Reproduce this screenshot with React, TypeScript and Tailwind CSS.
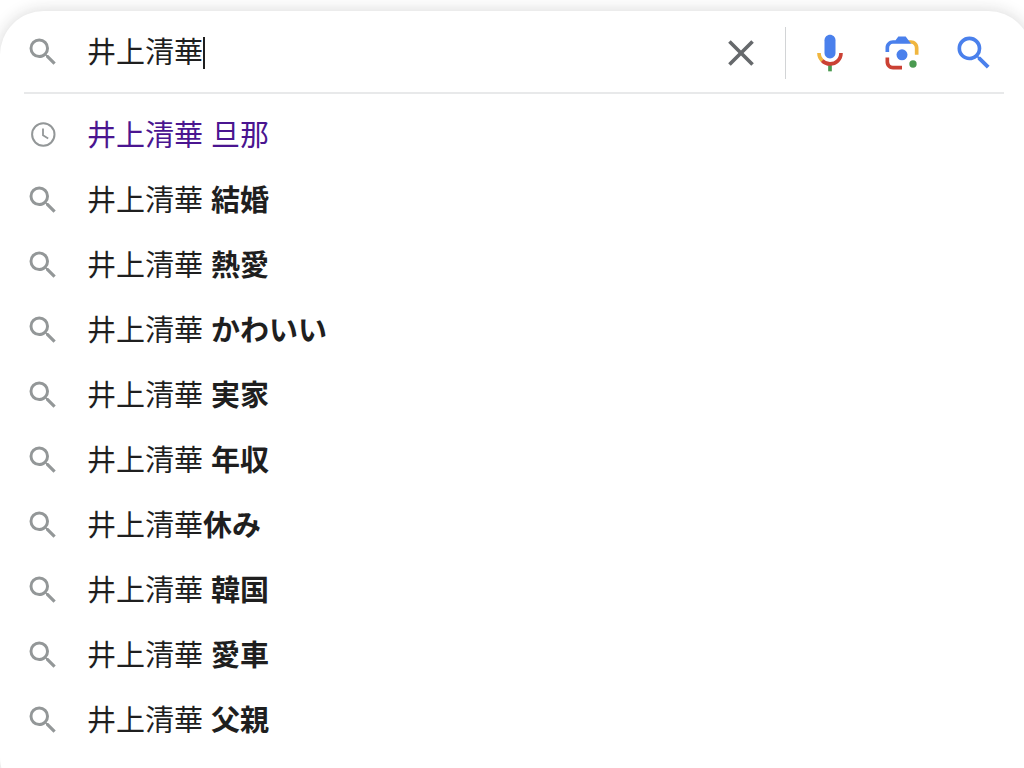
import { useState } from 'react';

type Suggestion = {
  query: string;
  completion: string;
  spaced?: boolean;
  visited?: boolean;
};

const suggestions: Suggestion[] = [
  { query: '井上清華', completion: '旦那', spaced: true, visited: true },
  { query: '井上清華', completion: '結婚', spaced: true },
  { query: '井上清華', completion: '熱愛', spaced: true },
  { query: '井上清華', completion: 'かわいい', spaced: true },
  { query: '井上清華', completion: '実家', spaced: true },
  { query: '井上清華', completion: '年収', spaced: true },
  { query: '井上清華', completion: '休み' },
  { query: '井上清華', completion: '韓国', spaced: true },
  { query: '井上清華', completion: '愛車', spaced: true },
  { query: '井上清華', completion: '父親', spaced: true },
];

function SearchIcon({ className }: { className: string }) {
  return (
    <svg viewBox="0 0 24 24" fill="currentColor" aria-hidden="true" className={className}>
      <path d="M15.5 14h-.79l-.28-.27A6.471 6.471 0 0 0 16 9.5 6.5 6.5 0 1 0 9.5 16c1.61 0 3.09-.59 4.23-1.57l.27.28v.79l5 4.99L20.49 19l-4.99-5zm-6 0C7.01 14 5 11.99 5 9.5S7.01 5 9.5 5 14 7.01 14 9.5 11.99 14 9.5 14z" />
    </svg>
  );
}

function ClockIcon({ className }: { className: string }) {
  return (
    <svg viewBox="0 0 36 36" fill="none" stroke="currentColor" aria-hidden="true" className={className}>
      <circle cx="18.3" cy="17.5" r="11.2" strokeWidth="2" />
      <path d="M18 11.5v6.8l5.2 3.2" strokeWidth="1.8" />
    </svg>
  );
}

function ClearIcon() {
  return (
    <svg viewBox="0 0 24 24" fill="currentColor" aria-hidden="true" className="size-11">
      <path d="M19 6.41L17.59 5 12 10.59 6.41 5 5 6.41 10.59 12 5 17.59 6.41 19 12 13.41 17.59 19 19 17.59 13.41 12z" />
    </svg>
  );
}

function MicIcon() {
  return (
    <svg viewBox="0 0 24 24" aria-hidden="true" className="size-11">
      <path fill="#4a80ec" d="m12 15c1.66 0 3-1.31 3-2.97v-7.02c0-1.66-1.34-3.01-3-3.01s-3 1.34-3 3.01v7.02c0 1.66 1.34 2.97 3 2.97z" />
      <path fill="#4a9a50" d="m11 18.08h2v3.92h-2z" />
      <path fill="#f0b63f" d="m7.05 16.87c-1.27-1.33-2.05-2.83-2.05-4.87h2c0 1.45 0.56 2.42 1.47 3.38v0.32l-1.15 1.18z" />
      <path fill="#cb4134" d="m12 16.93a4.97 5.25 0 0 1 -3.54 -1.55l-1.41 1.49c1.26 1.34 3.02 2.13 4.95 2.13 3.87 0 6.99-2.92 6.99-7h-1.99c0 2.92-2.24 4.93-5 4.93z" />
    </svg>
  );
}

function LensIcon() {
  return (
    <svg viewBox="0 0 192 192" aria-hidden="true" className="size-11">
      <circle fill="#4a9a50" cx="144" cy="144" r="16" />
      <circle fill="#4a80ec" cx="96" cy="104" r="24" />
      <path fill="#cb4134" d="M24,135.2c0,18.11,14.69,32.8,32.8,32.8H96v-16l-40.1-0.1c-8.8,0-15.9-8.19-15.9-17.9v-18H24V135.2z" />
      <path fill="#f0b63f" d="M168,72.8c0-18.11-14.69-32.8-32.8-32.8H116l20,16c8.8,0,16,8.29,16,18v30h16V72.8z" />
      <path fill="#4a80ec" d="M112,24l-32,0L68,40H56.8C38.69,40,24,54.69,24,72.8V92h16V74c0-9.71,7.2-18,16-18h80L112,24z" />
    </svg>
  );
}

export default function App() {
  const [value, setValue] = useState('井上清華');

  return (
    <main className="h-screen overflow-hidden bg-white pt-[11px] font-['Liberation_Sans','Noto_Sans_CJK_JP',sans-serif] text-[29px] leading-10 text-[#1f1f1f]">
      <div className="-mr-2 rounded-[44px] bg-white pr-2 pb-12 shadow-[0_0_16px_rgba(32,33,36,0.18)]">
        <form role="search" onSubmit={(e) => e.preventDefault()} className="flex h-[81px] items-center pt-0.5 pr-7 pl-[25px]">
          <SearchIcon className="mb-0.5 size-9 shrink-0 text-[#939798]" />
          <div className="ml-[26px] flex min-w-0 flex-1 items-center">
            <input
              type="text"
              aria-label="検索"
              autoComplete="off"
              value={value}
              onChange={(e) => setValue(e.target.value)}
              className="field-sizing-content max-w-full bg-transparent caret-transparent outline-none"
            />
            <span className="h-8 w-0.5 shrink-0 bg-[#1f1f1f]" />
          </div>
          <button type="button" aria-label="クリア" onClick={() => setValue('')} className="text-[#66696c]">
            <ClearIcon />
          </button>
          <span className="mx-[22px] h-[52px] w-px bg-[#d2d4d6]" />
          <div className="flex items-center gap-7">
            <button type="button" aria-label="音声で検索">
              <MicIcon />
            </button>
            <button type="button" aria-label="画像で検索">
              <LensIcon />
            </button>
            <button type="submit" aria-label="検索する" className="text-[#4a80ec]">
              <SearchIcon className="size-11" />
            </button>
          </div>
        </form>
        <hr className="mr-5 ml-6 border-t-2 border-[#e8e9ea]" />

        <ul className="pt-[9px]">
          {suggestions.map((item) => (
            <li key={item.completion}>
              <a href="#" className="flex h-[65px] items-center gap-[26px] pl-[25px]">
                {item.visited ? (
                  <ClockIcon className="mb-0.5 size-9 shrink-0 text-[#939798]" />
                ) : (
                  <SearchIcon className="mb-0.5 size-9 shrink-0 text-[#939798]" />
                )}
                <span className={item.visited ? 'text-[#4a1590]' : ''}>
                  {item.query}
                  {item.spaced && ' '}
                  {item.visited ? item.completion : <b className="font-bold">{item.completion}</b>}
                </span>
              </a>
            </li>
          ))}
        </ul>
      </div>
    </main>
  );
}
